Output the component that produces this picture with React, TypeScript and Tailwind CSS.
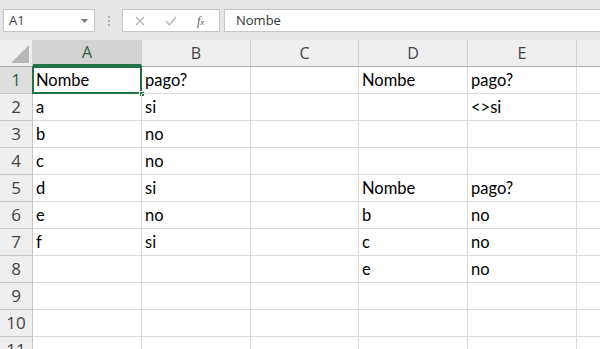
import React from "react";

const cols = [
  { l: "A", w: 109 },
  { l: "B", w: 109 },
  { l: "C", w: 108 },
  { l: "D", w: 109 },
  { l: "E", w: 109 },
  { l: "", w: 40 },
];

const data: Record<number, string[]> = {
  1: ["Nombe", "pago?", "", "Nombe", "pago?", ""],
  2: ["a", "si", "", "", "<>si", ""],
  3: ["b", "no", "", "", "", ""],
  4: ["c", "no", "", "", "", ""],
  5: ["d", "si", "", "Nombe", "pago?", ""],
  6: ["e", "no", "", "b", "no", ""],
  7: ["f", "si", "", "c", "no", ""],
  8: ["", "", "", "e", "no", ""],
  9: ["", "", "", "", "", ""],
  10: ["", "", "", "", "", ""],
  11: ["", "", "", "", "", ""],
};

export default function App() {
  const rows = [1, 2, 3, 4, 5, 6, 7, 8, 9, 10, 11];
  return (
    <div className="w-[600px] h-[349px] overflow-hidden bg-white" style={{ fontFamily: "Lato, 'Noto Sans', sans-serif" }}>
      {/* formula bar */}
      <div className="h-[40px] bg-[#e6e6e6] flex items-center pt-[1px] pl-[3px] gap-0">
        <div className="w-[92px] h-[23px] bg-white border border-[#c6c6c6] flex items-center justify-between pl-[5px] pr-[6px]">
          <span className="text-[13px] text-[#444]" style={{ fontFamily: "'Open Sans', sans-serif" }}>A1</span>
          <svg width="7" height="4" viewBox="0 0 7 4"><path d="M0 0h7L3.5 4z" fill="#777" /></svg>
        </div>
        <div className="w-[27px] flex flex-col items-center gap-[2px]">
          <div className="w-[2px] h-[2px] bg-[#b0b0b0]" />
          <div className="w-[2px] h-[2px] bg-[#b0b0b0]" />
          <div className="w-[2px] h-[2px] bg-[#b0b0b0]" />
        </div>
        <div className="w-[98px] h-[23px] bg-white border border-[#c6c6c6] flex items-center pl-[12px]">
          <svg width="10" height="10" viewBox="0 0 10 10" className="mr-[20px]"><path d="M1 1l8 8M9 1L1 9" stroke="#b5b5b5" strokeWidth="1.2" /></svg>
          <svg width="12" height="10" viewBox="0 0 12 10" className="mr-[20px]"><path d="M1 5l3.5 4L11 1" stroke="#b5b5b5" strokeWidth="1.3" fill="none" /></svg>
          <span className="text-[12px] italic text-[#555]" style={{ fontFamily: "'Liberation Serif', serif" }}>f<span className="text-[9px]">x</span></span>
        </div>
        <div className="ml-[4px] flex-1 h-[23px] bg-white border border-[#c6c6c6] border-r-0 flex items-center pl-[11px]">
          <span className="text-[13px] text-[#333]" style={{ fontFamily: "'Open Sans', sans-serif" }}>Nombe</span>
        </div>
      </div>
      {/* column header */}
      <div className="flex h-[27px] bg-[#efefef] border-b border-[#ababab]">
        <div className="w-[33px] shrink-0 relative border-r border-[#d0d0d0]">
          <svg className="absolute right-[3px] bottom-[3px]" width="18" height="18" viewBox="0 0 18 18"><path d="M18 0V18H0z" fill="#b8b8b8" /></svg>
        </div>
        {cols.map((c, i) => (
          <div
            key={i}
            className={`shrink-0 flex items-center justify-center border-r border-[#d0d0d0] text-[16px] ${i === 0 ? "bg-[#d3d3d3] text-[#2e5e3e] border-b-2 border-b-[#217346]" : "text-[#444]"}`}
            style={{ width: c.w, fontFamily: "'Open Sans', sans-serif" }}
          >
            {c.l}
          </div>
        ))}
      </div>
      {rows.map((r) => (
        <div key={r} className="flex h-[27px]">
          <div className={`w-[33px] shrink-0 flex items-center justify-center border-r border-b border-[#c6c6c6] text-[17px] ${r === 1 ? "bg-[#dedede] text-[#2e5e3e]" : "bg-[#efefef] text-[#444]"}`} style={{ fontFamily: "'Open Sans', sans-serif" }}>
            {r}
          </div>
          {cols.map((c, i) => (
            <div
              key={i}
              className="shrink-0 relative flex items-center pl-[3px] pt-[1px] border-r border-b border-[#dadada] text-[16.5px] text-black"
              style={{ width: c.w }}
            >
              {data[r][i]}
              {r === 1 && i === 0 && (
                <>
                  <div className="absolute left-[-1px] top-[-1px] right-[-1px] bottom-[-1px] border-2 border-[#217346]" />
                  <div className="absolute right-[-4px] bottom-[-4px] w-[6px] h-[6px] bg-[#217346] border border-white" />
                </>
              )}
            </div>
          ))}
        </div>
      ))}
    </div>
  );
}
